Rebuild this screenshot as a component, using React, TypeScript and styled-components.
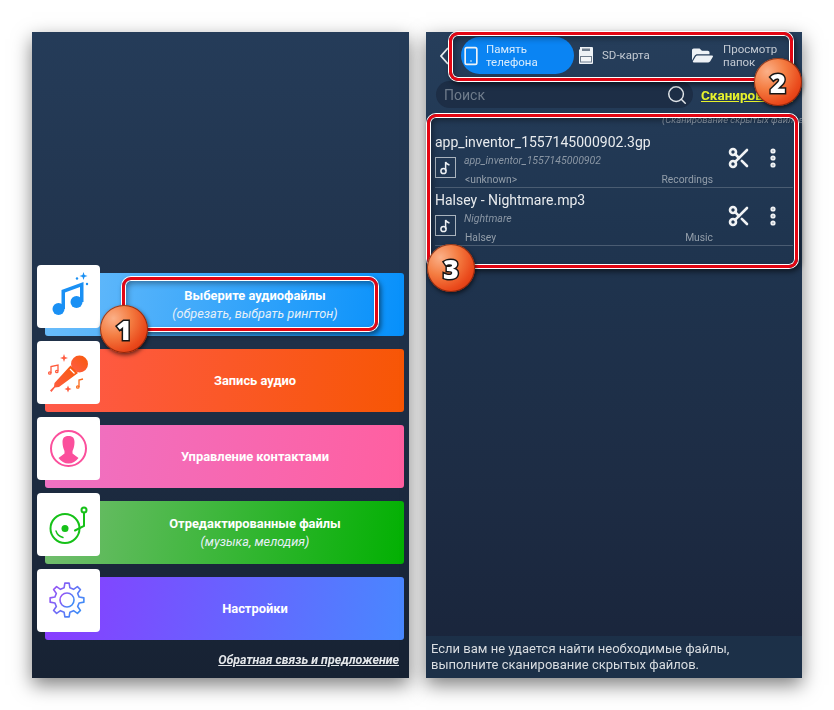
import { ReactNode } from 'react';
import styled, { createGlobalStyle } from 'styled-components';
import { EllipsisVertical, Scissors, Search, Smartphone } from 'lucide-react';
import { FaFolderOpen } from 'react-icons/fa';

const GlobalStyle = createGlobalStyle`
  html, body {
    margin: 0;
    background: #fff;
    font-family: Roboto, "Liberation Sans", sans-serif;
  }
`;

const Page = styled.div`
  position: relative;
  width: 834px;
  height: 710px;
  overflow: hidden;
  box-sizing: border-box;
  padding: 32px 0 0 32px;
  display: flex;
  gap: 17px;
`;

const Phone = styled.div`
  width: 376px;
  height: 646px;
  display: flex;
  flex-direction: column;
  overflow: hidden;
  background: linear-gradient(180deg, #263e5b 0%, #1f3550 30%, #1d2c44 70%, #19243a 100%);
  box-shadow: 0 7px 18px rgba(0, 0, 0, 0.5);
  filter: blur(0.3px);
`;

const MenuPhone = styled(Phone)`
  width: 377px;
  justify-content: flex-end;
  padding: 0 5px 10px;
  box-sizing: border-box;
  background: linear-gradient(180deg, #253c59 0%, #1f3048 50%, #172233 100%);
`;

const Menu = styled.div`
  display: flex;
  flex-direction: column;
  gap: 5px;
`;

const MenuItem = styled.div`
  position: relative;
  height: 71px;
  padding: 8px 0 0 8px;
  box-sizing: border-box;
`;

const MenuIcon = styled.div`
  position: absolute;
  left: 0;
  top: 0;
  width: 63px;
  height: 63px;
  border-radius: 4px;
  background: #fff;

  svg {
    display: block;
  }
`;

const MenuBar = styled.div<{ $from: string; $to: string }>`
  height: 63px;
  padding-left: 61px;
  border-radius: 3px;
  display: flex;
  flex-direction: column;
  align-items: center;
  justify-content: center;
  gap: 3px;
  color: #fff;
  background: linear-gradient(100deg, ${(p) => p.$from}, ${(p) => p.$to});
`;

const MenuTitle = styled.div`
  font-size: 12.9px;
  font-weight: 700;
  line-height: 15px;
`;

const MenuNote = styled.div`
  font-size: 12.7px;
  font-style: italic;
  line-height: 15px;
  color: #e6f0f8;
`;

const Feedback = styled.a`
  align-self: flex-end;
  margin: 12px 5px 0 0;
  font-size: 12.4px;
  font-weight: 700;
  font-style: italic;
  line-height: 16px;
  color: #e4e7ea;
  text-decoration: underline;
`;

const TopBar = styled.div`
  display: flex;
  align-items: center;
  height: 37px;
  margin-top: 5px;
  padding-left: 14px;
`;

const Back = styled.svg`
  width: 9px;
  height: 18px;
  margin-right: 12px;
`;

const Tab = styled.div<{ $width: number; $active?: boolean }>`
  width: ${(p) => p.$width}px;
  height: 37px;
  flex: none;
  box-sizing: border-box;
  display: flex;
  align-items: center;
  border-radius: 19px;
  font-size: 11.5px;
  line-height: 13px;
  color: ${(p) => (p.$active ? '#d9ecfd' : '#c3cad3')};
  background: ${(p) => (p.$active ? '#0a84f3' : 'transparent')};
`;

const TabIcon = styled.div<{ $width: number; $pad: number }>`
  flex: none;
  box-sizing: border-box;
  width: ${(p) => p.$width}px;
  padding-left: ${(p) => p.$pad}px;
  display: flex;
  align-items: center;
  color: #eef2f6;
`;

const SearchRow = styled.div`
  display: flex;
  align-items: center;
  margin: 7px 0 0 10px;
  white-space: nowrap;
`;

const SearchBox = styled.div`
  width: 257px;
  height: 27px;
  flex: none;
  box-sizing: border-box;
  padding: 0 5px 0 8px;
  display: flex;
  align-items: center;
  justify-content: space-between;
  border-radius: 14px;
  background: #1d2e46;
  font-size: 14px;
  color: #6f7c8b;
  svg {
    color: #e3e7ea;
  }
`;

const ScanLink = styled.span`
  margin-left: 8px;
  font-size: 13.5px;
  font-weight: 700;
  color: #e7f22c;
  text-decoration: underline;
`;

const ScanHint = styled.div`
  height: 22px;
  padding: 6px 0 0 236px;
  box-sizing: border-box;
  font-size: 9.5px;
  font-style: italic;
  line-height: 12px;
  color: #8b97a6;
  white-space: nowrap;
`;

const List = styled.div`
  margin: 0 9px;
  flex: 1;
`;

const Row = styled.div`
  height: 58px;
  box-sizing: border-box;
  display: flex;
  align-items: center;
  border-bottom: 1px solid #4a5c72;
`;

const RowBody = styled.div`
  width: 278px;
  flex: none;
  padding-top: 2px;
`;

const FileName = styled.div`
  font-size: 14px;
  line-height: 18px;
  color: #e8ebee;
  white-space: nowrap;
`;

const Meta = styled.div`
  display: grid;
  grid-template-columns: 29px 1fr auto;
  grid-template-rows: 17px 19px;
`;

const NoteBox = styled.div`
  grid-row: 1 / 3;
  width: 21px;
  height: 21px;
  margin-top: 6px;
  box-sizing: border-box;
  border: 1px solid #a9b3bd;
  display: flex;
  align-items: center;
  justify-content: center;
`;

const SongTitle = styled.div`
  grid-column: 2 / 4;
  align-self: end;
  font-size: 10.5px;
  font-style: italic;
  line-height: 14px;
  color: #8a96a4;
`;

const Artist = styled.div`
  align-self: end;
  padding-left: 1px;
  font-size: 10.3px;
  line-height: 14px;
  color: #939eaa;
`;

const Album = styled(Artist)`
  text-align: right;
`;

const RowActions = styled.div`
  margin-left: 14px;
  display: flex;
  align-items: center;
  gap: 10px;
  color: #f1f3f5;
  position: relative;
  top: -1px;
`;

const HelpBar = styled.div`
  height: 42px;
  box-sizing: border-box;
  padding: 5px 5px 0;
  background: #1c3048;
  font-size: 13px;
  line-height: 16px;
  color: #d9dde1;
`;

const Highlight = styled.div<{ $x: number; $y: number; $w: number; $h: number }>`
  position: absolute;
  left: ${(p) => p.$x}px;
  top: ${(p) => p.$y}px;
  width: ${(p) => p.$w}px;
  height: ${(p) => p.$h}px;
  box-sizing: border-box;
  border: 3px solid #e30613;
  border-radius: 9px;
  box-shadow:
    0 0 0 1px #fff,
    inset 0 0 0 1px #fff,
    2px 3px 5px 1px rgba(0, 0, 0, 0.5),
    inset 2px 3px 6px rgba(0, 0, 0, 0.4);
`;

const Badge = styled.div<{ $x: number; $y: number }>`
  position: absolute;
  left: ${(p) => p.$x - 24}px;
  top: ${(p) => p.$y - 24}px;
  width: 48px;
  height: 48px;
  border-radius: 50%;
  display: flex;
  align-items: center;
  justify-content: center;
  background: radial-gradient(circle at 28% 28%, #fbb088 0%, #f47d42 36%, #ea4a1c 68%, #d02a08 100%);
  box-shadow:
    inset 0 0 0 1px rgba(110, 25, 5, 0.7),
    1px 2px 4px rgba(0, 0, 0, 0.6);
  font-family: "Open Sans", "Liberation Sans", sans-serif;
  font-size: 27px;
  font-weight: 800;
  color: #fff;
  -webkit-text-stroke: 3px #151515;
  paint-order: stroke fill;
`;

const gearPath = (cx: number, cy: number, outer: number, inner: number, teeth: number) => {
  const step = (Math.PI * 2) / teeth;
  let d = '';
  for (let i = 0; i < teeth; i++) {
    const a = i * step - Math.PI / 2;
    const pts = [
      [inner, a - step * 0.3],
      [outer, a - step * 0.16],
      [outer, a + step * 0.16],
      [inner, a + step * 0.3],
    ];
    pts.forEach(([r, t], j) => {
      const x = (cx + r * Math.cos(t)).toFixed(2);
      const y = (cy + r * Math.sin(t)).toFixed(2);
      d += `${i === 0 && j === 0 ? 'M' : 'L'}${x} ${y} `;
    });
  }
  return d + 'Z';
};

const MusicIcon = () => (
  <svg width="63" height="63" viewBox="0 0 63 63">
    <g fill="#1a90f4">
      <circle cx="21.5" cy="44" r="6" />
      <circle cx="39.5" cy="37" r="6" />
      <path d="M24.5 25 L46.5 17 V37 H43 V22 L28 27.5 V44 H24.5 Z" />
      <path d="M46.5 7 L47.5 10 L50.5 11 L47.5 12 L46.5 15 L45.5 12 L42.5 11 L45.5 10 Z" />
      <circle cx="40" cy="13.5" r="1.2" />
      <circle cx="50" cy="19" r="1.2" />
    </g>
  </svg>
);

const MicIcon = () => (
  <svg width="63" height="63" viewBox="0 0 63 63">
    <defs>
      <linearGradient id="mic" x1="0" y1="1" x2="1" y2="0">
        <stop offset="0" stopColor="#ff5d4a" />
        <stop offset="1" stopColor="#f85a08" />
      </linearGradient>
    </defs>
    <circle cx="42.5" cy="23" r="8.5" fill="url(#mic)" />
    <path d="M33.5 24.5 L41 32 L22 46 L18 46.5 L14.5 51 L13 49.5 L17 45.5 L17.5 42 Z" fill="url(#mic)" />
    <path d="M33 28 L37.5 32.5" stroke="#fff" strokeWidth="1.2" />
    <g fill="none" stroke="#ff5a3c" strokeWidth="1.3">
      <path d="M14 32 V25.5 L21 24 V30" />
      <circle cx="12.8" cy="32" r="1.2" />
      <circle cx="19.8" cy="30.5" r="1.2" />
      <path d="M42 46 V39 L46 38" stroke="#fa6a1c" />
      <circle cx="40.8" cy="46" r="1.2" stroke="#fa6a1c" />
    </g>
    <g fill="#ff5c40">
      <path d="M27 13 L28 16 L31 17 L28 18 L27 21 L26 18 L23 17 L26 16 Z" />
      <path d="M31 44.5 L32 47 L34.5 48 L32 49 L31 51.5 L30 49 L27.5 48 L30 47 Z" />
    </g>
  </svg>
);

const ContactIcon = () => (
  <svg width="63" height="63" viewBox="0 0 63 63">
    <circle cx="31.5" cy="31.5" r="17.5" fill="none" stroke="#fb4f9c" strokeWidth="2" />
    <path
      d="M25.5 25 C25.5 20.5 28 19 31.5 19 C35 19 37.5 20.5 37.5 25 C37.5 29 36.5 32 35.5 34 L35.5 36.5 L41.5 41 C39 44.5 35.5 46.5 31.5 46.5 C27.5 46.5 24 44.5 21.5 41 L27.5 36.5 L27.5 34 C26.5 32 25.5 29 25.5 25 Z"
      fill="#fb4f9c"
    />
  </svg>
);

const DeckIcon = () => (
  <svg width="63" height="63" viewBox="0 0 63 63">
    <g fill="none" stroke="#16c118" strokeWidth="2" strokeLinecap="round">
      <circle cx="28" cy="35.5" r="14.5" />
      <path d="M19 38 C20 41.5 22.5 43.5 26 44.5" strokeWidth="1.4" />
      <circle cx="47" cy="17" r="2.5" />
      <path d="M47 19.5 V33 L38 37.5" />
    </g>
    <circle cx="28" cy="35.5" r="3.5" fill="#16c118" />
  </svg>
);

const GearIcon = () => (
  <svg width="63" height="63" viewBox="0 0 63 63">
    <defs>
      <linearGradient id="gear" x1="0" y1="0" x2="1" y2="0.6">
        <stop offset="0" stopColor="#a24cf5" />
        <stop offset="1" stopColor="#3f8cf7" />
      </linearGradient>
    </defs>
    <path
      d={gearPath(30, 31, 17, 12.5, 8)}
      fill="none"
      stroke="url(#gear)"
      strokeWidth="1.6"
      strokeLinejoin="round"
    />
    <circle cx="30" cy="31" r="7" fill="none" stroke="url(#gear)" strokeWidth="1.6" />
  </svg>
);

const SdIcon = () => (
  <svg width="14" height="17" viewBox="0 0 14 17">
    <path d="M1 0 H13 A1 1 0 0 1 14 1 V16 A1 1 0 0 1 13 17 H1 A1 1 0 0 1 0 16 V3 L1 2 Z" fill="#eef2f6" />
    <path d="M3 1.5 H11 V4 H3 Z" fill="#6f7d8d" />
    <rect x="1.5" y="9.5" width="11" height="5.5" fill="#f4f6f8" stroke="#6f7d8d" strokeWidth="1" />
  </svg>
);

const NoteIcon = () => (
  <svg width="15" height="15" viewBox="0 0 15 15">
    <circle cx="5.5" cy="11" r="2.6" fill="none" stroke="#eef1f4" strokeWidth="1.5" />
    <path d="M7.6 11 V2 C8.2 4 10 4.5 11.5 5" fill="none" stroke="#eef1f4" strokeWidth="1.5" />
  </svg>
);

const menuItems: { icon: ReactNode; title: string; note?: string; from: string; to: string }[] = [
  { icon: <MusicIcon />, title: 'Выберите аудиофайлы', note: '(обрезать, выбрать рингтон)', from: '#6cbdfa', to: '#0690fb' },
  { icon: <MicIcon />, title: 'Запись аудио', from: '#ff5a4c', to: '#f75604' },
  { icon: <ContactIcon />, title: 'Управление контактами', from: '#ee72c4', to: '#ff5fa0' },
  { icon: <DeckIcon />, title: 'Отредактированные файлы', note: '(музыка, мелодия)', from: '#74bd70', to: '#02b002' },
  { icon: <GearIcon />, title: 'Настройки', from: '#8a3bff', to: '#4888ff' },
];

const files = [
  { name: 'app_inventor_1557145000902.3gp', title: 'app_inventor_1557145000902', artist: '<unknown>', album: 'Recordings' },
  { name: 'Halsey - Nightmare.mp3', title: 'Nightmare', artist: 'Halsey', album: 'Music' },
];

export default function App() {
  return (
    <Page>
      <GlobalStyle />
      <MenuPhone>
        <Menu>
          {menuItems.map((item) => (
            <MenuItem key={item.title}>
              <MenuBar $from={item.from} $to={item.to}>
                <MenuTitle>{item.title}</MenuTitle>
                {item.note && <MenuNote>{item.note}</MenuNote>}
              </MenuBar>
              <MenuIcon>{item.icon}</MenuIcon>
            </MenuItem>
          ))}
        </Menu>
        <Feedback>Обратная связь и предложение</Feedback>
      </MenuPhone>

      <Phone>
        <TopBar>
          <Back viewBox="0 0 9 18">
            <path d="M8 1 L1 9 L8 17" fill="none" stroke="#e6eaee" strokeWidth="1.8" />
          </Back>
          <Tab $width={113} $active>
            <TabIcon $width={25} $pad={0}>
              <Smartphone size={20} strokeWidth={2} />
            </TabIcon>
            <span>
              Память
              <br />
              телефона
            </span>
          </Tab>
          <Tab $width={111}>
            <TabIcon $width={28} $pad={5}>
              <SdIcon />
            </TabIcon>
            <span>SD-карта</span>
          </Tab>
          <Tab $width={100}>
            <TabIcon $width={38} $pad={7}>
              <FaFolderOpen size={21} />
            </TabIcon>
            <span>
              Просмотр
              <br />
              папок
            </span>
          </Tab>
        </TopBar>

        <SearchRow>
          <SearchBox>
            <span>Поиск</span>
            <Search size={22} strokeWidth={1.6} />
          </SearchBox>
          <ScanLink>Сканирование</ScanLink>
        </SearchRow>
        <ScanHint>(Сканирование скрытых файлов)</ScanHint>

        <List>
          {files.map((file) => (
            <Row key={file.name}>
              <RowBody>
                <FileName>{file.name}</FileName>
                <Meta>
                  <NoteBox>
                    <NoteIcon />
                  </NoteBox>
                  <SongTitle>{file.title}</SongTitle>
                  <Artist>{file.artist}</Artist>
                  <Album>{file.album}</Album>
                </Meta>
              </RowBody>
              <RowActions>
                <Scissors size={24} strokeWidth={2.6} />
                <EllipsisVertical size={24} strokeWidth={3.2} />
              </RowActions>
            </Row>
          ))}
        </List>

        <HelpBar>
          Если вам не удается найти необходимые файлы,
          <br />
          выполните сканирование скрытых файлов.
        </HelpBar>
      </Phone>

      <Highlight $x={122} $y={277} $w={256} $h={54} />
      <Highlight $x={449} $y={32} $w={344} $h={49} />
      <Highlight $x={427} $y={114} $w={371} $h={154} />
      <Badge $x={124} $y={329}>1</Badge>
      <Badge $x={778} $y={82}>2</Badge>
      <Badge $x={451} $y={268}>3</Badge>
    </Page>
  );
}
